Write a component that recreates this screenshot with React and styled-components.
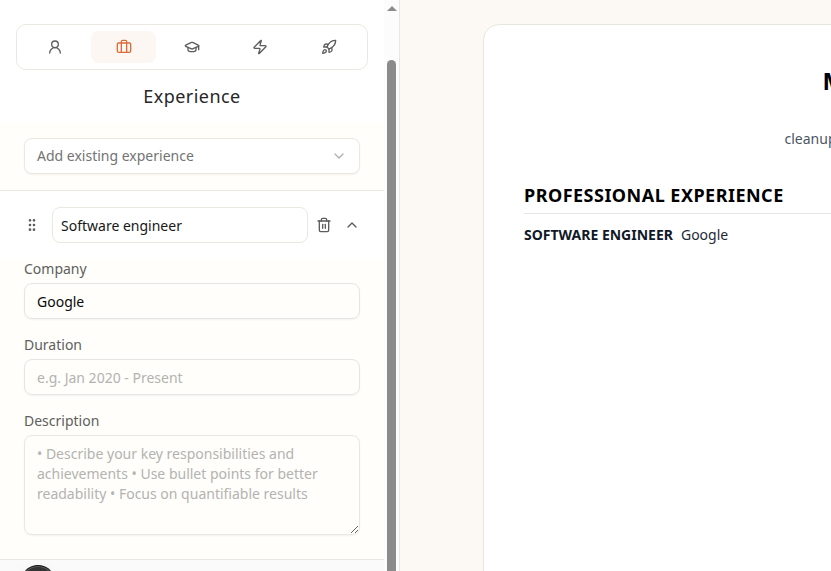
import React from "react";
import styled, { createGlobalStyle } from "styled-components";
import { UserRound, Briefcase, GraduationCap, Zap, Rocket, ChevronDown, ChevronUp, Trash2, GripVertical } from "lucide-react";

const GlobalStyle = createGlobalStyle`
  *, *::before, *::after { box-sizing: border-box; }
  body { margin: 0; overflow: hidden; font-family: "Noto Sans", sans-serif; font-size: 14px; line-height: 20px; color: #0a0a0a; }
  input, textarea, button { font: inherit; }
`;

const Page = styled.div`
  display: flex;
  width: 100%;
  height: 100vh;
  overflow: hidden;
  background: #fcf9f4;
`;

const Sidebar = styled.aside`
  display: flex;
  flex: 0 0 400px;
  border-right: 1px solid #e9e7e0;
  background: #fffefa;
`;

const Editor = styled.div`
  position: relative;
  display: flex;
  flex-direction: column;
  width: 384px;
  overflow: hidden;
`;

const Header = styled.header`
  flex: none;
  height: 122px;
  padding: 24px 16px 0;
  background: #fff;
`;

const Tabs = styled.nav`
  display: grid;
  grid-template-columns: repeat(5, 1fr);
  gap: 4px;
  height: 46px;
  padding: 6px;
  border: 1px solid #ebe8df;
  border-radius: 10px;
`;

const Tab = styled.button`
  display: flex;
  align-items: center;
  justify-content: center;
  padding: 0;
  border: 0;
  border-radius: 8px;
  color: ${(p) => (p.$active ? "#dc6b38" : "#5c5c5c")};
  background: ${(p) => (p.$active ? "#fdf7f4" : "transparent")};
`;

const Title = styled.h2`
  margin: 12px 0 0;
  font-size: 18px;
  line-height: 28px;
  font-weight: 400;
  letter-spacing: 0.45px;
  text-align: center;
  color: #262626;
`;

const PickerSection = styled.section`
  flex: none;
  padding: 16px 24px;
  border-bottom: 1px solid #ebe8df;
`;

const Picker = styled.button`
  display: flex;
  align-items: center;
  justify-content: space-between;
  width: 100%;
  height: 36px;
  padding: 0 12px;
  border: 1px solid #ebe8df;
  border-radius: 8px;
  background: #fff;
  color: #737373;
  box-shadow: 0 1px 2px rgba(0, 0, 0, 0.05);
  svg { color: #b0b0b0; }
`;

const EntryHeader = styled.div`
  display: flex;
  flex: none;
  align-items: center;
  height: 68px;
  padding: 0 24px;
  background: #fff;
  color: #5c5c5c;
`;

const TitleInput = styled.input`
  width: 256px;
  height: 36px;
  margin: 0 8px 0 12px;
  padding: 0 8px;
  border: 1px solid #ebe8df;
  border-radius: 8px;
  outline: 0;
  background: #fff;
  color: #171717;
`;

const IconButton = styled.button`
  display: flex;
  align-items: center;
  justify-content: center;
  flex: none;
  width: 16px;
  height: 28px;
  padding: 0;
  border: 0;
  background: none;
  color: #5c5c5c;
  & + & { margin-left: 12px; }
`;

const Form = styled.form`
  display: flex;
  flex: none;
  flex-direction: column;
  gap: 16px;
  height: 300px;
  padding: 0 24px;
`;

const Field = styled.label`
  display: flex;
  flex-direction: column;
  gap: 4px;
  color: #5e5e5e;
`;

const Input = styled.input`
  width: 100%;
  height: 36px;
  padding: 0 12px;
  border: 1px solid #e5e5e5;
  border-radius: 8px;
  outline: 0;
  background: transparent;
  color: #0a0a0a;
  box-shadow: 0 1px 2px rgba(0, 0, 0, 0.05);
  &::placeholder { color: #b3b3b1; opacity: 1; }
`;

const TextArea = styled.textarea`
  width: 100%;
  height: 100px;
  padding: 8px 12px;
  border: 1px solid #e9e7e1;
  border-radius: 8px;
  outline: 0;
  resize: vertical;
  background: transparent;
  box-shadow: 0 1px 2px rgba(0, 0, 0, 0.05);
  &::placeholder { color: #b3b3b1; opacity: 1; }
`;

const Footer = styled.footer`
  flex: 1;
  border-top: 1px solid #e8e7e4;
  background: #fafafa;
`;

const Badge = styled.div`
  position: absolute;
  left: 20px;
  top: 565px;
  width: 36px;
  height: 36px;
  border-radius: 50%;
  border: 1px solid #171717;
  background: #343434;
  box-shadow: inset 0 0 0 1px #5a5a5a, 0 4px 16px -4px rgba(0, 0, 0, 0.12);
`;

const ScrollTrack = styled.div`
  display: flex;
  flex-direction: column;
  align-items: center;
  width: 15px;
  height: 100%;
  overflow: hidden;
  background: #fcfcfc;
`;

const ScrollArrow = styled.div`
  flex: none;
  margin-top: 6px;
  border: solid transparent;
  border-width: 0 5px 5px;
  border-bottom-color: #8b8b8b;
`;

const ScrollThumb = styled.div`
  flex: none;
  width: 9px;
  height: 600px;
  margin-top: 49px;
  border-radius: 5px;
  background: #8b8b8b;
`;

const Preview = styled.main`
  flex: 1;
  min-width: 0;
  padding: 24px 0 0 83px;
  overflow: hidden;
`;

const Sheet = styled.article`
  width: 794px;
  height: 1000px;
  padding: 40px;
  border: 1px solid #e9e7dd;
  border-radius: 16px;
  background: #fff;
`;

const Name = styled.h1`
  margin: 0 0 0 298.5px;
  font-size: 24px;
  line-height: 32px;
  font-weight: 700;
  color: #000;
`;

const Contact = styled.p`
  margin: 32px 0 0 260.5px;
  color: #4b5563;
`;

const SectionTitle = styled.h3`
  margin: 32px 0 0;
  padding-bottom: 4px;
  border-bottom: 1px solid #e5e5e5;
  font-size: 18px;
  line-height: 28px;
  font-weight: 700;
  letter-spacing: 0.48px;
  color: #000;
`;

const Job = styled.div`
  display: flex;
  gap: 8px;
  margin-top: 11px;
  color: #1f2937;
  strong { font-weight: 700; color: #111827; }
`;

const TABS = [UserRound, Briefcase, GraduationCap, Zap, Rocket];

export default function App() {
  return (
    <>
      <GlobalStyle />
      <Page>
        <Sidebar>
          <Editor>
            <Header>
              <Tabs>
                {TABS.map((Icon, i) => (
                  <Tab key={i} $active={i === 1}>
                    <Icon size={16} strokeWidth={2} />
                  </Tab>
                ))}
              </Tabs>
              <Title>Experience</Title>
            </Header>
            <PickerSection>
              <Picker>
                Add existing experience
                <ChevronDown size={16} strokeWidth={2} />
              </Picker>
            </PickerSection>
            <EntryHeader>
              <GripVertical size={16} />
              <TitleInput defaultValue="Software engineer" />
              <IconButton>
                <Trash2 size={16} strokeWidth={2} />
              </IconButton>
              <IconButton>
                <ChevronUp size={16} strokeWidth={2} />
              </IconButton>
            </EntryHeader>
            <Form>
              <Field>
                Company
                <Input defaultValue="Google" />
              </Field>
              <Field>
                Duration
                <Input placeholder="e.g. Jan 2020 - Present" />
              </Field>
              <Field>
                Description
                <TextArea placeholder="• Describe your key responsibilities and achievements • Use bullet points for better readability • Focus on quantifiable results" />
              </Field>
            </Form>
            <Footer />
            <Badge />
          </Editor>
          <ScrollTrack>
            <ScrollArrow />
            <ScrollThumb />
          </ScrollTrack>
        </Sidebar>
        <Preview>
          <Sheet>
            <Name>M</Name>
            <Contact>cleanup</Contact>
            <SectionTitle>PROFESSIONAL EXPERIENCE</SectionTitle>
            <Job>
              <strong>SOFTWARE ENGINEER</strong>
              <span>Google</span>
            </Job>
          </Sheet>
        </Preview>
      </Page>
    </>
  );
}
